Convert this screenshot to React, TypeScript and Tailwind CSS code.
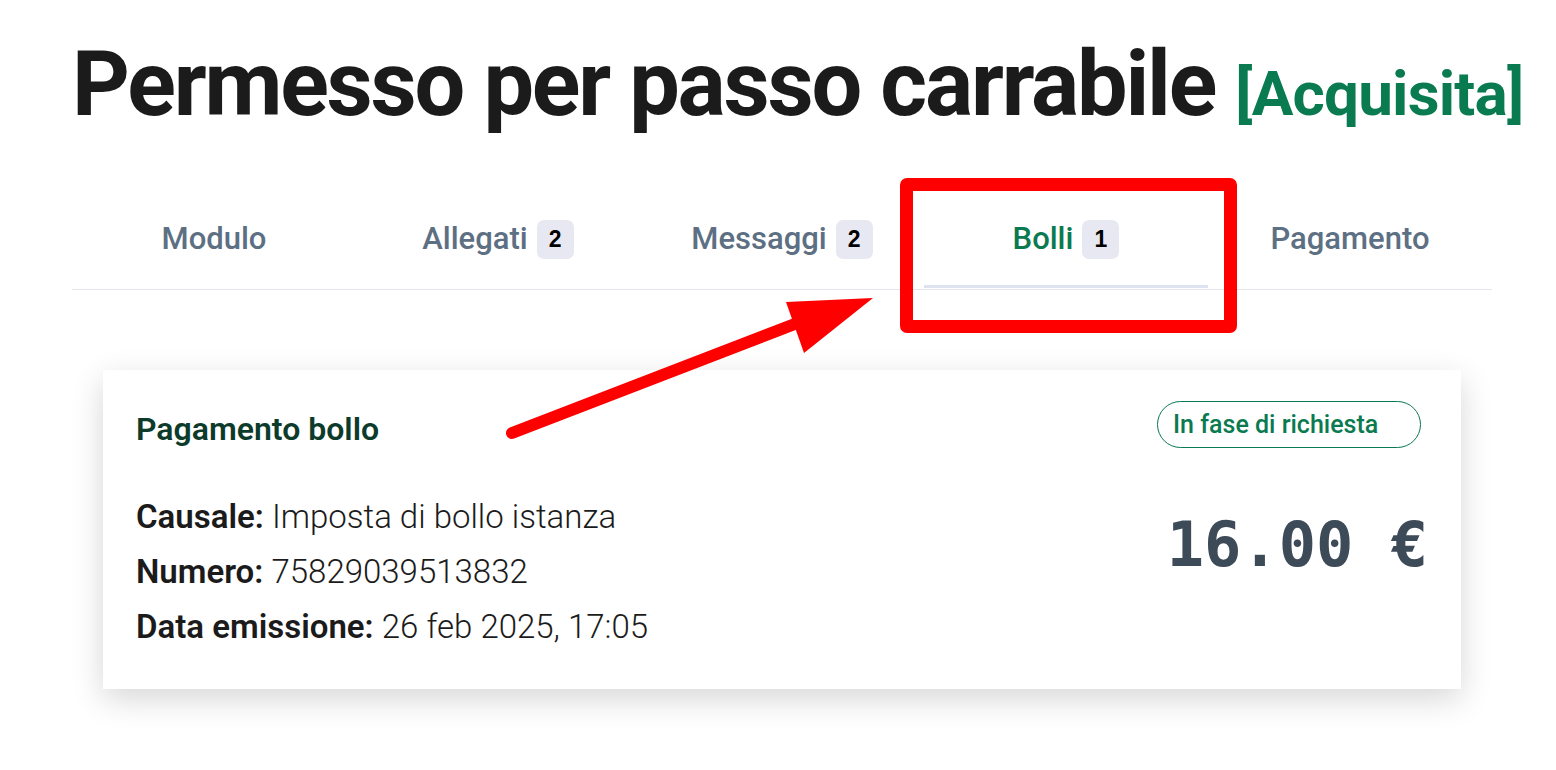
import React from "react";

// Tab della pratica
const tabs = [
  { label: "Modulo" },
  { label: "Allegati", count: 2 },
  { label: "Messaggi", count: 2 },
  { label: "Bolli", count: 1, active: true },
  { label: "Pagamento" },
];

const Badge = ({ n }: { n: number }) => (
  <span className="ml-[9px] inline-flex h-[39px] w-[37px] items-center justify-center rounded-[7px] bg-[#e8e8f3] font-['Liberation_Sans',sans-serif] text-[23px] font-bold text-black">
    {n}
  </span>
);

export default function App() {
  return (
    <div className="relative min-h-screen bg-white px-[72px] pt-[35px] font-['Roboto',sans-serif]">
      <div className="w-[1420px]">
        <h1 className="whitespace-nowrap text-[90px] font-bold leading-[100px] tracking-[-2.2px] text-[#1b1b1b]">
          Permesso per passo carrabile{" "}
          <span className="text-[62px] leading-none tracking-[-0.8px] text-[#0a7a50]">[Acquisita]</span>
        </h1>

        {/* Tabs */}
        <div className="mt-[55px] grid grid-cols-5 border-b border-[#e3e6ea]">
          {tabs.map((t) => (
            <div
              key={t.label}
              className={`relative flex h-[99px] items-center justify-center text-[31px] font-medium ${
                t.active ? "text-[#0a7a50]" : "text-[#5d7083]"
              }`}
            >
              <span>{t.label}</span>
              {t.count !== undefined && <Badge n={t.count} />}
              {t.active && (
                <span className="absolute bottom-[1px] left-0 right-0 h-[3px] bg-[#dfe3f0]" />
              )}
            </div>
          ))}
        </div>

        {/* Card bollo */}
        <div className="mx-[31px] mt-[80px] h-[319px] bg-white px-[33px] pt-[31px] shadow-[0_10px_30px_rgba(0,0,0,0.16)]">
          <div className="flex items-start justify-between">
            <h2 className="mt-[12px] text-[32px] font-semibold leading-[32px] text-[#0d3b2b]">Pagamento bollo</h2>
            <span className="mr-[7px] flex h-[47px] w-[264px] items-center rounded-full border border-[#0a7a50] pl-[15px] text-[25px] font-medium text-[#0a7a50]">
              In fase di richiesta
            </span>
          </div>
          <div className="mt-[52px] flex justify-between">
            <div className="flex flex-col gap-[21px] text-[33px] leading-[34px] text-[#1b1b1b]">
              <p>
                <b className="font-semibold">Causale:</b> <span className="font-light">Imposta di bollo istanza</span>
              </p>
              <p>
                <b className="font-semibold">Numero:</b> <span className="font-light">75829039513832</span>
              </p>
              <p>
                <b className="font-semibold">Data emissione:</b> <span className="font-light">26 feb 2025, 17:05</span>
              </p>
            </div>
            <div className="pt-[10px] font-['DejaVu_Sans_Mono',monospace] text-[62px] font-bold leading-[70px] text-[#3d4a57]">
              16.00 €
            </div>
          </div>
        </div>
      </div>

      {/* Annotazione rossa */}
      <div className="pointer-events-none absolute left-[900px] top-[178px] h-[155px] w-[337px] rounded-[7px] border-[13px] border-[#ff0000]" />
      <svg className="pointer-events-none absolute left-0 top-0" width="1556" height="770">
        <line x1="512" y1="433" x2="800" y2="322" stroke="#ff0000" strokeWidth="12" strokeLinecap="round" />
        <polygon points="786,302 873,298 804,353" fill="#ff0000" />
      </svg>
    </div>
  );
}
